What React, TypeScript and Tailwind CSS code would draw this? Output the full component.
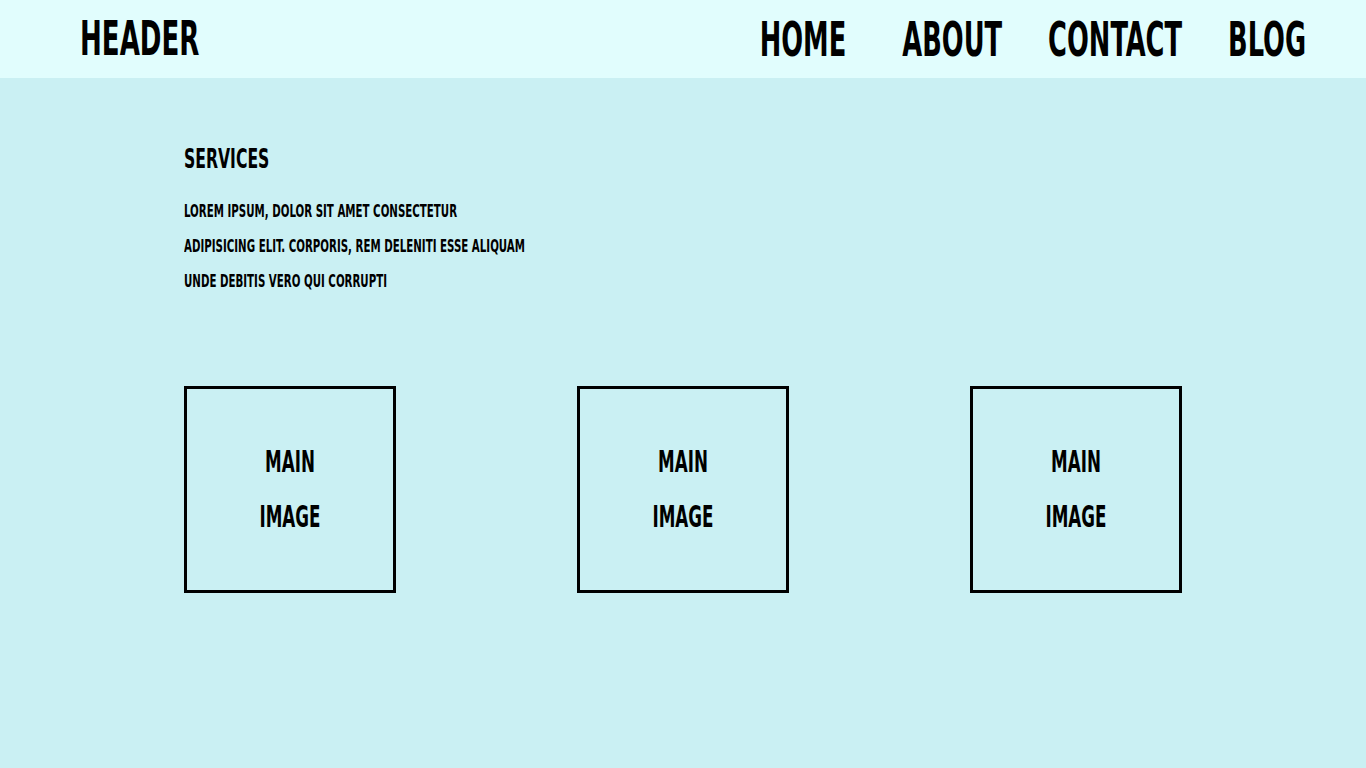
import React from 'react';

const font = { fontFamily: '"Liberation Sans Narrow", "DejaVu Sans Condensed", sans-serif' };

const navLinks = ['HOME', 'ABOUT', 'CONTACT', 'BLOG'];

const lines = [
  'LOREM IPSUM, DOLOR SIT AMET CONSECTETUR',
  'ADIPISICING ELIT. CORPORIS, REM DELENITI ESSE ALIQUAM',
  'UNDE DEBITIS VERO QUI CORRUPTI',
];

function ImageBox() {
  return (
    <div className="w-[212px] h-[207px] border-[3px] border-black flex flex-col items-center justify-center gap-[36px]">
      <span className="inline-block text-[18.6px] font-bold leading-none scale-y-[1.62]">MAIN</span>
      <span className="inline-block text-[18.6px] font-bold leading-none scale-y-[1.62]">IMAGE</span>
    </div>
  );
}

export default function App() {
  return (
    <div className="min-h-screen bg-[#caf0f3] text-black" style={font}>
      {/* Header */}
      <header className="h-[78px] bg-[#e1fdfd] flex items-center justify-between pl-[80px] pr-[60px]">
        <span className="inline-block text-[29px] font-bold leading-none scale-y-[1.66]">HEADER</span>
        <nav className="flex items-center gap-[46px]">
          {navLinks.map((link, i) => (
            <a
              key={link}
              href="#"
              className={`inline-block text-[28.6px] font-bold leading-none scale-y-[1.68] ${i === 0 ? 'mr-[10px]' : ''}`}
            >
              {link}
            </a>
          ))}
        </nav>
      </header>

      {/* Services */}
      <main className="w-[998px] mx-auto pt-[70px]">
        <h2 className="inline-block text-[17.4px] font-bold leading-none scale-y-[1.57]">SERVICES</h2>
        <div className="mt-[34px] flex flex-col gap-[23.6px]">
          {lines.map((line) => (
            <p key={line} className="text-[11.4px] font-bold leading-none">
              <span className="inline-block scale-y-[1.5]">{line}</span>
            </p>
          ))}
        </div>

        <div className="mt-[99px] flex justify-between">
          <ImageBox />
          <ImageBox />
          <ImageBox />
        </div>
      </main>
    </div>
  );
}
